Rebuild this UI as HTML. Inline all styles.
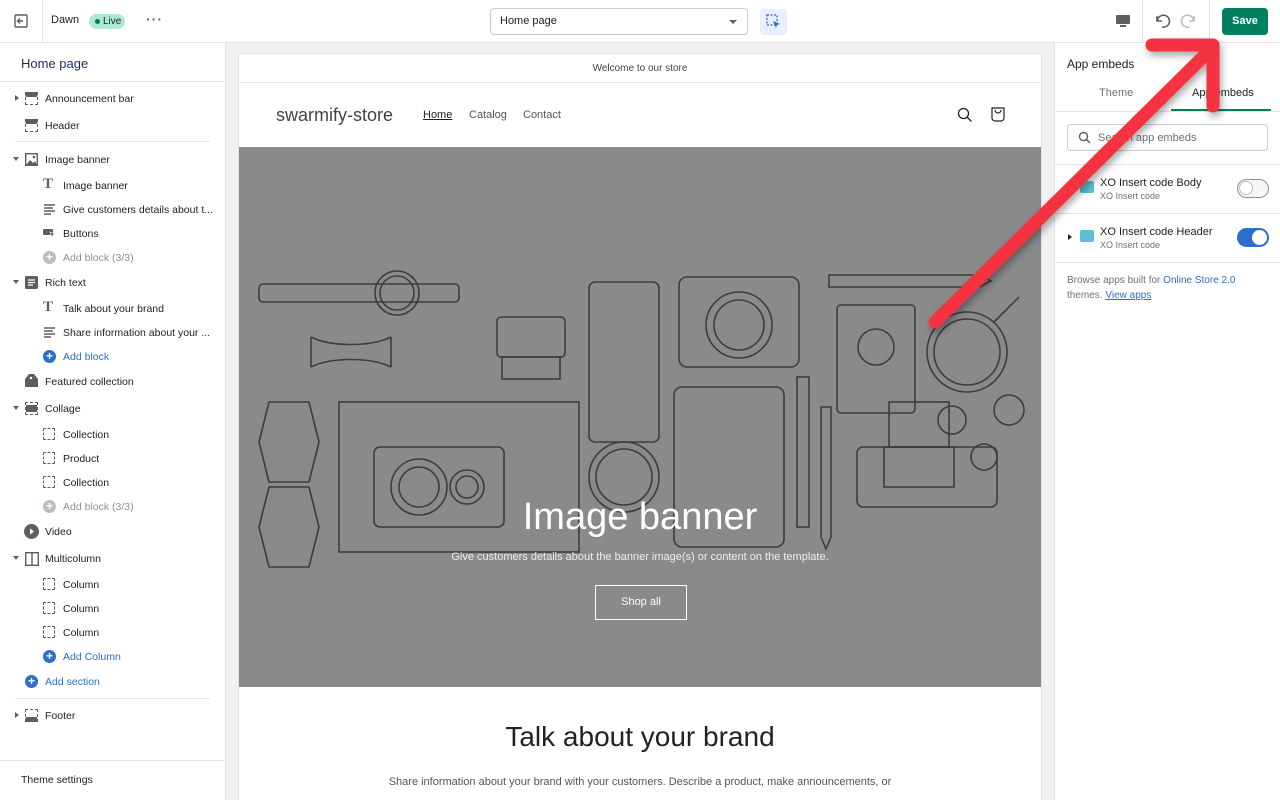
<!DOCTYPE html>
<html><head><meta charset="utf-8"><style>
*{box-sizing:border-box;margin:0;padding:0}
body{width:1280px;height:800px;overflow:hidden;font-family:"Liberation Sans",sans-serif;background:#f1f1f1;position:relative;color:#202223}
.a{position:absolute}
.top{left:0;top:0;width:1280px;height:43px;background:#fff;border-bottom:1px solid #e1e3e5}
.side{left:0;top:43px;width:226px;height:757px;background:#fff;border-right:1px solid #e1e3e5}
.right{left:1054px;top:43px;width:226px;height:757px;background:#fff;border-left:1px solid #e1e3e5}
.it{position:absolute;font-size:11px;color:#202223;white-space:nowrap;line-height:14px}
.blk,.sec{font-size:10.5px;margin-top:1px}
.blk{left:63px}
.sec{left:45px}
.ic{position:absolute;width:13px;height:13px}
.car{position:absolute;left:13px;width:0;height:0}
.cd{border-left:3.5px solid transparent;border-right:3.5px solid transparent;border-top:4px solid #5c5f62}
.cr{border-top:3.5px solid transparent;border-bottom:3.5px solid transparent;border-left:4px solid #5c5f62;left:15px}
.blue{color:#2c6ecb}
.grey{color:#8c9196}
.dash{border:1.5px dashed #5c5f62;border-radius:1px}
</style></head><body>
<div class="a top">
 <svg class="a" style="left:14px;top:14px" width="14" height="14" viewBox="0 0 14 14"><rect x="1" y="1" width="12" height="12" rx="1" fill="none" stroke="#5c5f62" stroke-width="1.4"/><path d="M9 7H4M6 4.5L3.5 7 6 9.5" fill="none" stroke="#5c5f62" stroke-width="1.4"/></svg>
 <div class="a" style="left:42px;top:0;width:1px;height:43px;background:#e1e3e5"></div>
 <div class="it" style="left:51px;top:13px">Dawn</div>
 <div class="a" style="left:89px;top:14px;width:36px;height:15px;border-radius:8px;background:#aee9d1;font-size:10px;line-height:15px;padding-left:14px;color:#202223">Live<span class="a" style="left:6px;top:5px;width:5px;height:5px;border-radius:50%;background:#007f5f"></span></div>
 <div class="it" style="left:146px;top:12px;font-size:14px;letter-spacing:1px;color:#5c5f62;font-weight:bold">···</div>
 <div class="a" style="left:490px;top:8px;width:258px;height:27px;border:1px solid #c9cccf;border-radius:4px;font-size:11px;line-height:25px;padding-left:9px">Home page<span class="a" style="right:10px;top:11px;border-left:4px solid transparent;border-right:4px solid transparent;border-top:4px solid #5c5f62"></span></div>
 <div class="a" style="left:760px;top:9px;width:27px;height:26px;border-radius:4px;background:#e8f0fb"></div>
 <svg class="a" style="left:766px;top:14px" width="16" height="16" viewBox="0 0 16 16"><rect x="1" y="1" width="10" height="10" fill="none" stroke="#2c6ecb" stroke-width="1.3" stroke-dasharray="2 1.5"/><path d="M7 7l7 3-3 1-1 3z" fill="#2c6ecb"/></svg>
 <svg class="a" style="left:1115px;top:13px" width="16" height="16" viewBox="0 0 16 16"><rect x="1" y="2" width="14" height="9" rx="1" fill="#5c5f62"/><rect x="5" y="12" width="6" height="2" fill="#5c5f62"/></svg>
 <div class="a" style="left:1142px;top:0;width:1px;height:43px;background:#e1e3e5"></div>
 <svg class="a" style="left:1153px;top:12px" width="18" height="18" viewBox="0 0 18 18"><path d="M4 4v5h5M4.5 8.5A6 6 0 1 1 9 15" fill="none" stroke="#5c5f62" stroke-width="1.6"/></svg>
 <svg class="a" style="left:1180px;top:12px" width="18" height="18" viewBox="0 0 18 18"><path d="M14 4v5H9M13.5 8.5A6 6 0 1 0 9 15" fill="none" stroke="#babec3" stroke-width="1.6"/></svg>
 <div class="a" style="left:1209px;top:0;width:1px;height:43px;background:#e1e3e5"></div>
 <div class="a" style="left:1222px;top:8px;width:46px;height:27px;border-radius:4px;background:#008060;color:#fff;font-size:11px;font-weight:bold;text-align:center;line-height:27px">Save</div>
</div>

<div class="a side">
 <div class="it" style="left:21px;top:14px;font-size:13px;color:#1f2d5c">Home page</div>
 <div class="a" style="left:0;top:38px;width:225px;height:1px;background:#e1e3e5"></div>
 <div class="a" style="left:15px;top:98px;width:195px;height:1px;background:#e1e3e5"></div>
 <div class="a" style="left:15px;top:655px;width:195px;height:1px;background:#e1e3e5"></div>
 <div class="a" style="left:0;top:717px;width:225px;height:1px;background:#e1e3e5"></div>
 <div class="it" style="left:21px;top:730px;font-size:10.5px">Theme settings</div>
</div>

<div class="car cr" style="top:95px"></div><div class="ic" style="left:25px;top:92px;border-top:5px solid #5c5f62;border-bottom:1.5px dashed #5c5f62;border-left:1.5px dashed #5c5f62;border-right:1.5px dashed #5c5f62"></div><div class="it sec" style="top:91px">Announcement bar</div>
<div class="ic" style="left:25px;top:119px;border-top:5px solid #5c5f62;border-bottom:1.5px dashed #5c5f62;border-left:1.5px dashed #5c5f62;border-right:1.5px dashed #5c5f62"></div><div class="it sec" style="top:118px">Header</div>
<div class="car cd" style="top:157px"></div><svg class="ic" style="left:25px;top:153px" viewBox="0 0 13 13"><rect x="0.7" y="0.7" width="11.6" height="11.6" fill="none" stroke="#5c5f62" stroke-width="1.4"/><path d="M1 12l4-5 3 3 2-2 2 4z" fill="#5c5f62"/><circle cx="9" cy="4" r="1.3" fill="#5c5f62"/></svg><div class="it sec" style="top:152px">Image banner</div>
<div class="it" style="left:43px;top:177px;font-family:'Liberation Serif',serif;font-weight:bold;font-size:15px;color:#5c5f62">T</div><div class="it blk" style="top:178px">Image banner</div>
<svg class="ic" style="left:43px;top:203px" viewBox="0 0 13 13"><path d="M1 2h11M1 5h9M1 8h11M1 11h7" stroke="#5c5f62" stroke-width="1.4"/></svg><div class="it blk" style="top:202px">Give customers details about t...</div>
<svg class="ic" style="left:43px;top:227px" viewBox="0 0 13 13"><rect x="0" y="2" width="10" height="6" rx="1" fill="#5c5f62"/><path d="M7 5l5 2-2 1-1 3z" fill="#5c5f62" stroke="#fff" stroke-width=".6"/></svg><div class="it blk" style="top:226px">Buttons</div>
<div class="ic" style="left:43px;top:251px;border-radius:50%;background:#babec3;color:#fff;font-size:12px;line-height:12px;text-align:center;font-weight:bold">+</div><div class="it blk grey" style="top:250px">Add block (3/3)</div>
<div class="car cd" style="top:280px"></div><svg class="ic" style="left:25px;top:276px" viewBox="0 0 13 13"><rect x="0" y="0" width="13" height="13" rx="1.5" fill="#5c5f62"/><path d="M3 4h7M3 6.5h7M3 9h5" stroke="#fff" stroke-width="1.2"/></svg><div class="it sec" style="top:275px">Rich text</div>
<div class="it" style="left:43px;top:300px;font-family:'Liberation Serif',serif;font-weight:bold;font-size:15px;color:#5c5f62">T</div><div class="it blk" style="top:301px">Talk about your brand</div>
<svg class="ic" style="left:43px;top:326px" viewBox="0 0 13 13"><path d="M1 2h11M1 5h9M1 8h11M1 11h7" stroke="#5c5f62" stroke-width="1.4"/></svg><div class="it blk" style="top:325px">Share information about your ...</div>
<div class="ic" style="left:43px;top:350px;border-radius:50%;background:#2c6ecb;color:#fff;font-size:12px;line-height:12px;text-align:center;font-weight:bold">+</div><div class="it blk blue" style="top:349px">Add block</div>
<svg class="ic" style="left:25px;top:374px" viewBox="0 0 13 13"><path d="M4 0h5l4 5v8H0V5z" fill="#5c5f62"/><circle cx="6" cy="4" r="1.2" fill="#fff"/></svg><div class="it sec" style="top:374px">Featured collection</div>
<div class="car cd" style="top:406px"></div><div class="ic" style="left:25px;top:402px;border-top:1.5px dashed #5c5f62;border-bottom:1.5px dashed #5c5f62;border-left:1.5px dashed #5c5f62;border-right:1.5px dashed #5c5f62;background:#5c5f62;background-clip:content-box;padding:2px 0"></div><div class="it sec" style="top:401px">Collage</div>
<div class="ic dash" style="left:43px;top:428px;width:12px;height:12px"></div><div class="it blk" style="top:427px">Collection</div>
<div class="ic dash" style="left:43px;top:452px;width:12px;height:12px"></div><div class="it blk" style="top:451px">Product</div>
<div class="ic dash" style="left:43px;top:476px;width:12px;height:12px"></div><div class="it blk" style="top:475px">Collection</div>
<div class="ic" style="left:43px;top:500px;border-radius:50%;background:#babec3;color:#fff;font-size:12px;line-height:12px;text-align:center;font-weight:bold">+</div><div class="it blk grey" style="top:499px">Add block (3/3)</div>
<svg class="ic" style="left:24px;top:524px;width:15px;height:15px" viewBox="0 0 15 15"><circle cx="7.5" cy="7.5" r="7.5" fill="#5c5f62"/><path d="M6 4.5l4 3-4 3z" fill="#fff"/></svg><div class="it sec" style="top:524px">Video</div>
<div class="car cd" style="top:556px"></div><svg class="ic" style="left:25px;top:552px;width:14px;height:14px" viewBox="0 0 14 14"><rect x=".7" y=".7" width="12.6" height="12.6" fill="none" stroke="#5c5f62" stroke-width="1.4"/><path d="M7 1v12" stroke="#5c5f62" stroke-width="1.4"/></svg><div class="it sec" style="top:551px">Multicolumn</div>
<div class="ic dash" style="left:43px;top:578px;width:12px;height:12px"></div><div class="it blk" style="top:577px">Column</div>
<div class="ic dash" style="left:43px;top:602px;width:12px;height:12px"></div><div class="it blk" style="top:601px">Column</div>
<div class="ic dash" style="left:43px;top:626px;width:12px;height:12px"></div><div class="it blk" style="top:625px">Column</div>
<div class="ic" style="left:43px;top:650px;border-radius:50%;background:#2c6ecb;color:#fff;font-size:12px;line-height:12px;text-align:center;font-weight:bold">+</div><div class="it blk blue" style="top:649px">Add Column</div>
<div class="ic" style="left:25px;top:675px;border-radius:50%;background:#2c6ecb;color:#fff;font-size:12px;line-height:12px;text-align:center;font-weight:bold">+</div><div class="it sec blue" style="top:674px">Add section</div>
<div class="car cr" style="top:712px"></div><div class="ic" style="left:25px;top:709px;border-bottom:5px solid #5c5f62;border-top:1.5px dashed #5c5f62;border-left:1.5px dashed #5c5f62;border-right:1.5px dashed #5c5f62"></div><div class="it sec" style="top:708px">Footer</div>

<div class="a" style="left:238px;top:53px;width:804px;height:747px;background:#fff;border:1px solid #e1e3e5;border-bottom:none">
 <div class="a" style="left:0;top:0;width:802px;height:29px;border-bottom:1px solid #e8e8e8;text-align:center;font-size:10px;line-height:29px;color:#444">Welcome to our store</div>
 <div class="it" style="left:37px;top:51px;font-size:18px;line-height:20px;color:#444">swarmify-store</div>
 <div class="it" style="left:184px;top:54px;font-size:11px;color:#222;text-decoration:underline">Home</div>
 <div class="it" style="left:230px;top:54px;font-size:11px;color:#555">Catalog</div>
 <div class="it" style="left:284px;top:54px;font-size:11px;color:#555">Contact</div>
 <svg class="a" style="left:718px;top:53px" width="16" height="16" viewBox="0 0 16 16"><circle cx="6.5" cy="6.5" r="5" fill="none" stroke="#222" stroke-width="1.3"/><path d="M10 10l4.5 4.5" stroke="#222" stroke-width="1.3"/></svg>
 <svg class="a" style="left:751px;top:52px" width="16" height="17" viewBox="0 0 16 17"><path d="M2 2h12v10a3 3 0 0 1-3 3H5a3 3 0 0 1-3-3z" fill="none" stroke="#222" stroke-width="1.2"/><path d="M5 4a3 3 0 0 0 6 0" fill="none" stroke="#222" stroke-width="1.2"/></svg>
 <div class="a" style="left:0;top:93px;width:802px;height:540px;background:#8a8a8a;overflow:hidden">
  <svg width="802" height="540" viewBox="0 0 802 540" fill="none" stroke="#3d3d3d" stroke-width="1.6">
   <rect x="20" y="137" width="200" height="18" rx="4"/><circle cx="158" cy="146" r="22"/><circle cx="158" cy="146" r="17"/>
   <path d="M72 190c20 10 60 10 80 0M72 190c0 18 0 20 0 30M152 190v30M72 220c20-10 60-10 80 0"/>
   <rect x="258" y="170" width="68" height="40" rx="4"/><rect x="263" y="210" width="58" height="22"/>
   <rect x="350" y="135" width="70" height="160" rx="6"/><circle cx="385" cy="330" r="35"/><circle cx="385" cy="330" r="28"/>
   <rect x="440" y="130" width="120" height="90" rx="8"/><circle cx="500" cy="178" r="33"/><circle cx="500" cy="178" r="25"/>
   <rect x="598" y="158" width="78" height="108" rx="4"/><circle cx="637" cy="200" r="18"/>
   <path d="M590 128h150v12H590zM740 128l12 6-12 6"/><circle cx="728" cy="205" r="40"/><circle cx="728" cy="205" r="33"/><path d="M755 175l25-25"/>
   <path d="M30 255h40l10 40-10 40H30l-10-40zM30 340h40l10 40-10 40H30l-10-40z"/>
   <rect x="100" y="255" width="240" height="150"/><rect x="135" y="300" width="130" height="80" rx="6"/><circle cx="180" cy="340" r="28"/><circle cx="180" cy="340" r="20"/><circle cx="228" cy="340" r="17"/><circle cx="228" cy="340" r="11"/>
   <rect x="435" y="240" width="110" height="160" rx="8"/><rect x="558" y="230" width="12" height="150"/><path d="M582 260h10v130l-5 12-5-12z"/>
   <rect x="618" y="300" width="140" height="60" rx="6"/><rect x="645" y="300" width="70" height="40"/><rect x="650" y="255" width="60" height="45"/>
   <circle cx="713" cy="273" r="14"/><circle cx="770" cy="263" r="15"/><circle cx="745" cy="310" r="13"/>
  </svg>
 </div>
 <div class="a" style="left:0;top:441px;width:802px;text-align:center;font-size:38px;color:#fff;line-height:44px">Image banner</div>
 <div class="a" style="left:0;top:497px;width:802px;text-align:center;font-size:11px;color:#eee">Give customers details about the banner image(s) or content on the template.</div>
 <div class="a" style="left:356px;top:531px;width:92px;height:35px;border:1px solid #fff;color:#fff;font-size:11px;text-align:center;line-height:33px">Shop all</div>
 <div class="a" style="left:0;top:665px;width:802px;text-align:center;font-size:28px;color:#222;line-height:36px">Talk about your brand</div>
 <div class="a" style="left:0;top:722px;width:802px;text-align:center;font-size:11px;color:#555">Share information about your brand with your customers. Describe a product, make announcements, or</div>
</div>

<div class="a right">
 <div class="it" style="left:12px;top:14px;font-size:12px">App embeds</div>
 <div class="it" style="left:44px;top:43px;color:#6d7175">Theme</div>
 <div class="it" style="left:137px;top:43px">App embeds</div>
 <div class="a" style="left:116px;top:66px;width:100px;height:2px;background:#008060"></div>
 <div class="a" style="left:0;top:68px;width:226px;height:1px;background:#e1e3e5"></div>
 <div class="a" style="left:12px;top:81px;width:201px;height:27px;border:1px solid #c9cccf;border-radius:4px"></div>
 <svg class="a" style="left:23px;top:88px" width="13" height="13" viewBox="0 0 13 13"><circle cx="5.5" cy="5.5" r="4" fill="none" stroke="#5c5f62" stroke-width="1.4"/><path d="M8.5 8.5l3.5 3.5" stroke="#5c5f62" stroke-width="1.5"/></svg>
 <div class="it" style="left:43px;top:88px;color:#6d7175">Search app embeds</div>
 <div class="a" style="left:0;top:121px;width:226px;height:1px;background:#e1e3e5"></div>
 <div class="a" style="left:25px;top:138px;width:14px;height:12px;background:#5bc0cf;border-radius:2px"></div>
 <div class="it" style="left:45px;top:133px">XO Insert code Body</div>
 <div class="it" style="left:45px;top:146px;font-size:9px;color:#6d7175">XO Insert code</div>
 <div class="a" style="left:182px;top:136px;width:32px;height:19px;border-radius:10px;border:1.5px solid #8c9196;background:#f6f6f7"><span class="a" style="left:1px;top:1px;width:14px;height:14px;border-radius:50%;background:#fff;border:1px solid #babec3"></span></div>
 <div class="a" style="left:0;top:170px;width:226px;height:1px;background:#e1e3e5"></div>
 <div class="a" style="left:13px;top:191px;border-top:3px solid transparent;border-bottom:3px solid transparent;border-left:4px solid #202223"></div>
 <div class="a" style="left:25px;top:187px;width:14px;height:12px;background:#5bc0cf;border-radius:2px"></div>
 <div class="it" style="left:45px;top:182px">XO Insert code Header</div>
 <div class="it" style="left:45px;top:195px;font-size:9px;color:#6d7175">XO Insert code</div>
 <div class="a" style="left:182px;top:185px;width:32px;height:19px;border-radius:10px;background:#2c6ecb"><span class="a" style="right:2px;top:2px;width:15px;height:15px;border-radius:50%;background:#fff"></span></div>
 <div class="a" style="left:0;top:219px;width:226px;height:1px;background:#e1e3e5"></div>
 <div class="it" style="left:12px;top:231px;font-size:10px;color:#6d7175">Browse apps built for <span style="color:#2c6ecb">Online Store 2.0</span></div>
 <div class="it" style="left:12px;top:246px;font-size:10px;color:#6d7175">themes. <span style="color:#2c6ecb;text-decoration:underline">View apps</span></div>
</div>

<svg class="a" style="left:0;top:0" width="1280" height="800" viewBox="0 0 1280 800">
 <defs><filter id="s" x="-20%" y="-20%" width="140%" height="140%"><feDropShadow dx="2" dy="4" stdDeviation="4" flood-color="#000" flood-opacity=".35"/></filter></defs>
 <g filter="url(#s)" stroke="#f5333f" stroke-width="13" stroke-linecap="round" stroke-linejoin="round" fill="none">
  <path d="M935 322L1210 50"/><path d="M1152 45H1213V106"/>
 </g>
</svg>
</body></html>
